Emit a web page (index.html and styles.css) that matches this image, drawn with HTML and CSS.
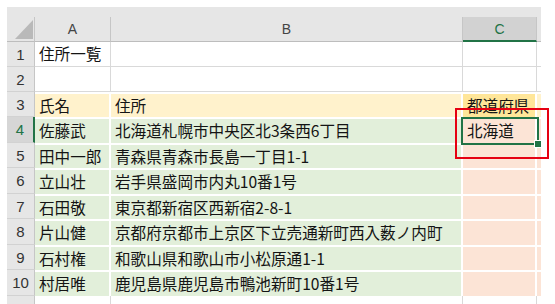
FILE: index.html
```html
<!DOCTYPE html>
<html lang="ja">
<head>
<meta charset="utf-8">
<title>住所一覧</title>
<link rel="stylesheet" href="styles.css">
</head>
<body>
<div class="wrap">
  <div class="topstrip"></div>
  <div class="sheet">
    <div class="corner"><svg width="18" height="19" viewBox="0 0 18 19"><polygon points="18,0 18,19 0,19" fill="#b9b9b9"/></svg></div>
    <div class="colh">A</div>
    <div class="colh">B</div>
    <div class="colh sel">C</div>
    <div class="colh edge"></div>

    <div class="rowh">1</div>
    <div class="cell">住所一覧</div>
    <div class="cell"></div>
    <div class="cell"></div>
    <div class="cell edge"></div>

    <div class="rowh">2</div>
    <div class="cell"></div>
    <div class="cell"></div>
    <div class="cell"></div>
    <div class="cell edge"></div>

    <div class="rowh">3</div>
    <div class="cell fill y">氏名</div>
    <div class="cell fill y">住所</div>
    <div class="cell fill yc">都道府県</div>
    <div class="cell fill y edge"></div>

    <div class="rowh sel">4</div>
    <div class="cell fill g">佐藤武</div>
    <div class="cell fill g">北海道札幌市中央区北3条西6丁目</div>
    <div class="cell fill p">北海道</div>
    <div class="cell fill p edge"></div>

    <div class="rowh">5</div>
    <div class="cell fill g">田中一郎</div>
    <div class="cell fill g">青森県青森市長島一丁目1-1</div>
    <div class="cell fill p"></div>
    <div class="cell fill p edge"></div>

    <div class="rowh">6</div>
    <div class="cell fill g">立山壮</div>
    <div class="cell fill g">岩手県盛岡市内丸10番1号</div>
    <div class="cell fill p"></div>
    <div class="cell fill p edge"></div>

    <div class="rowh">7</div>
    <div class="cell fill g">石田敬</div>
    <div class="cell fill g">東京都新宿区西新宿2-8-1</div>
    <div class="cell fill p"></div>
    <div class="cell fill p edge"></div>

    <div class="rowh">8</div>
    <div class="cell fill g">片山健</div>
    <div class="cell fill g">京都府京都市上京区下立売通新町西入薮ノ内町</div>
    <div class="cell fill p"></div>
    <div class="cell fill p edge"></div>

    <div class="rowh">9</div>
    <div class="cell fill g">石村権</div>
    <div class="cell fill g">和歌山県和歌山市小松原通1-1</div>
    <div class="cell fill p"></div>
    <div class="cell fill p edge"></div>

    <div class="rowh">10</div>
    <div class="cell fill g">村居唯</div>
    <div class="cell fill g">鹿児島県鹿児島市鴨池新町10番1号</div>
    <div class="cell fill p"></div>
    <div class="cell fill p edge"></div>

    <div class="rowh"></div>
    <div class="cell"></div>
    <div class="cell"></div>
    <div class="cell"></div>
    <div class="cell edge"></div>
  </div>
</div>
<div class="selection"><div class="handle"></div></div>
<div class="annot"></div>
</body>
</html>
```

FILE: styles.css
```css
html, body {
  margin: 0;
  padding: 0;
}
body {
  width: 555px;
  height: 304px;
  overflow: hidden;
  background: #ffffff;
  font-family: "Noto Sans CJK JP", "Noto Sans", sans-serif;
  position: relative;
}
.wrap {
  padding: 7px 0 0 7px;
}
.topstrip {
  width: 534px;
  height: 10px;
  background: #e6e6e6;
}
.sheet {
  display: grid;
  grid-template-columns: 28px 76px 352px 74px 4px;
  grid-template-rows: 25px 25px 25px 25px 26px 25px 26px 25px 26px 25px 26px 20px;
}
.sheet > div {
  box-sizing: border-box;
  display: flex;
  align-items: center;
  overflow: hidden;
  white-space: nowrap;
}
.corner {
  background: #e6e6e6;
  border-right: 1px solid #c6c6c6;
  border-bottom: 1px solid #bdbdbd;
  justify-content: flex-end;
  padding: 3px 1px 2px 0;
  align-items: flex-end !important;
}
.corner svg {
  display: block;
}
.colh {
  background: #e6e6e6;
  border-right: 1px solid #c6c6c6;
  border-bottom: 1px solid #bdbdbd;
  justify-content: center;
  font-family: "Liberation Sans", Arial, sans-serif;
  font-size: 14px;
  color: #444444;
}
.colh.sel {
  background: #d2d2d2;
  border-bottom: 2px solid #217346;
  color: #217346;
}
.rowh {
  background: #e6e6e6;
  border-right: 1px solid #c6c6c6;
  border-bottom: 1px solid #d2d2d2;
  justify-content: center;
  font-family: "Liberation Sans", Arial, sans-serif;
  font-size: 15px;
  color: #333333;
}
.rowh.sel {
  background: #d6d6d6;
  border-right: 2px solid #217346;
  color: #217346;
}
.cell {
  font-size: 15.6px;
  line-height: 1;
  padding-left: 4px;
  color: #141414;
  border-right: 1px solid #d9d9d9;
  border-bottom: 1px solid #d9d9d9;
}
.cell.fill {
  border-top: 2px solid #ffffff;
  border-right: 2px solid #ffffff;
  border-bottom: 0;
}
.cell.edge,
.colh.edge {
  border-right: 0;
  padding-left: 0;
}
.y { background: #fff2cc; }
.yc { background: #ffe699; }
.g { background: #e2efda; }
.p { background: #fce4d6; }

.selection {
  position: absolute;
  left: 461px;
  top: 117px;
  width: 78px;
  height: 28px;
  box-sizing: border-box;
  border: 2px solid #217346;
}
.handle {
  position: absolute;
  right: -5px;
  bottom: -5px;
  width: 6px;
  height: 6px;
  background: #217346;
  border: 1px solid #ffffff;
}
.annot {
  position: absolute;
  left: 455px;
  top: 108px;
  width: 94px;
  height: 51px;
  box-sizing: border-box;
  border: 2px solid #e60012;
}
```
